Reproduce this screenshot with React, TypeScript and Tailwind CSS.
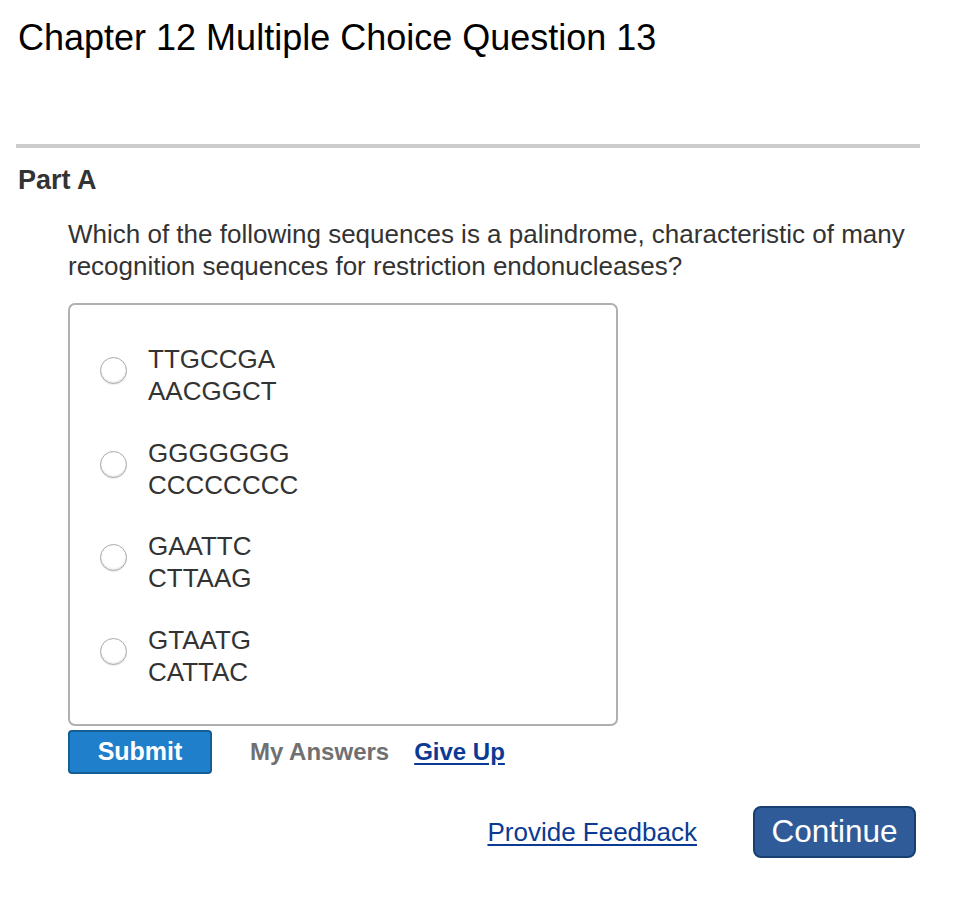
import React from "react";

const OPTIONS: [string, string][] = [
  ["TTGCCGA", "AACGGCT"],
  ["GGGGGGG", "CCCCCCCC"],
  ["GAATTC", "CTTAAG"],
  ["GTAATG", "CATTAC"],
];

export default function App() {
  return (
    <div className="min-h-[902px] w-[958px] bg-white font-['Liberation_Sans',Arial,sans-serif] text-[#222]">
      <div className="px-[18px] pt-[18px]">
        <h1 className="text-[36px] leading-[40px] text-black">Chapter 12 Multiple Choice Question 13</h1>
      </div>
      <div className="mx-[16px] mt-[86px] w-[904px] border-t-4 border-[#cccccc]" />
      <div className="px-[18px] pt-[17px]">
        <h2 className="text-[27px] font-bold leading-[30px] text-[#333]">Part A</h2>
      </div>
      <div className="pl-[68px] pr-[20px]">
        <p className="mt-[23px] text-[26px] leading-[32px] text-[#333]">
          Which of the following sequences is a palindrome, characteristic of many recognition sequences for
          restriction endonucleases?
        </p>
        <div className="mt-[21px] h-[423px] w-[550px] rounded-[7px] border-2 border-[#b0b0b0] pt-[38px]">
          {OPTIONS.map(([a, b], i) => (
            <label key={i} className="flex h-[93.5px] items-start gap-[21px] pl-[30px]">
              <span className="mt-[14px] h-[27px] w-[27px] shrink-0 rounded-full border border-[#aaaaaa] bg-white shadow-[inset_0_-1px_2px_rgba(0,0,0,0.12),0_1px_1px_rgba(0,0,0,0.08)]" />
              <span className="text-[26px] leading-[32px] text-[#333]">
                {a}
                <br />
                {b}
              </span>
            </label>
          ))}
        </div>
        <div className="mt-[4px] flex items-center">
          <button className="h-[44px] w-[144px] rounded-[4px] border-2 border-[#135e95] bg-[#1f7fcb] text-[25px] font-bold text-white">
            Submit
          </button>
          <span className="ml-[38px] text-[24px] font-bold text-[#707070]">My Answers</span>
          <a href="#" className="ml-[25px] text-[24px] font-bold text-[#0b3a94] underline underline-offset-[3px]">
            Give Up
          </a>
        </div>
      </div>
      <div className="mt-[32px] flex items-center justify-end pr-[42px]">
        <a href="#" className="text-[26px] text-[#0b3a94] underline underline-offset-[3px]">
          Provide Feedback
        </a>
        <button className="ml-[56px] h-[52px] w-[163px] rounded-[8px] border-2 border-[#173f72] bg-[#2f5c98] text-[31.5px] text-white">
          Continue
        </button>
      </div>
    </div>
  );
}
